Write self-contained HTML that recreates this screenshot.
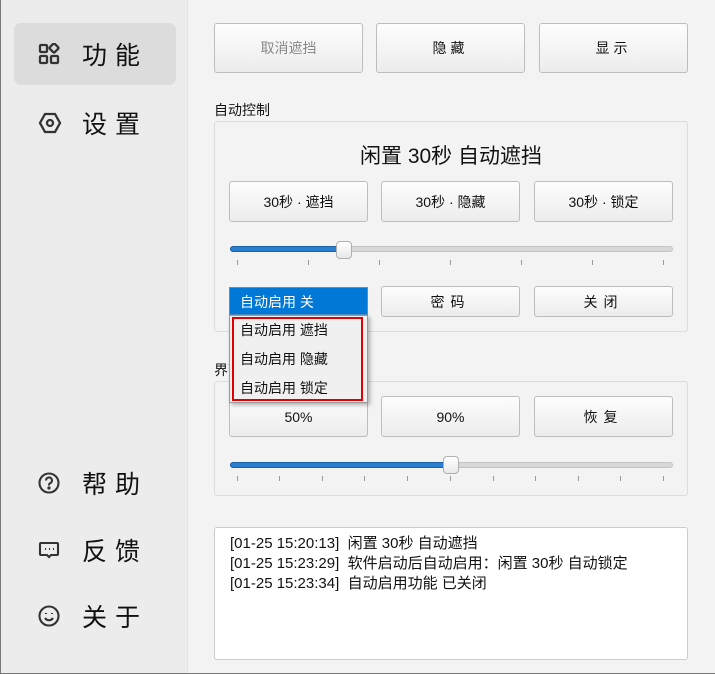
<!DOCTYPE html><html><head><meta charset="utf-8"><style>
*{box-sizing:border-box;margin:0;padding:0}
body{width:715px;height:674px;overflow:hidden;background:#f3f3f3;font-family:"Liberation Sans","Noto Sans CJK SC",sans-serif;color:#111;position:relative}
.frame{position:absolute;left:0;top:0;width:715px;height:674px;border-left:1px solid #777;border-bottom:1px solid #777;pointer-events:none;z-index:9}
.side{position:absolute;left:0;top:0;width:188px;height:674px;background:#ececec;border-right:1px solid #e4e4e4}
.nav{position:absolute;left:14px;width:162px;height:62px;display:flex;align-items:center;font-size:25px;letter-spacing:8px}
.nav.sel{background:#dcdcdc;border-radius:7px}
.nav svg{position:absolute;left:24px}
.nav span{position:absolute;left:68px}
.b{position:absolute;border:1px solid #bdbdbd;border-radius:3px;background:linear-gradient(#fdfdfd,#ececec);display:flex;align-items:center;justify-content:center;font-size:14px}
.grp{position:absolute;border:1px solid #dcdcdc;border-radius:3px;background:#f3f3f3}
.lbl{position:absolute;font-size:14px}
.track{position:absolute;height:6px;border-radius:3px;background:#d8d8d8;border:1px solid #c4c4c4}
.fill{position:absolute;height:6px;border-radius:3px;background:#2a7fd0;border:1px solid #1a60a8}
.h{position:absolute;width:16px;height:18px;border:1px solid #b0b0b0;border-radius:4px;background:linear-gradient(#fff,#e8e8e8)}
.tk{position:absolute;width:1px;height:5px;background:#999}
</style></head><body>
<div class="side">
<div class="nav sel" style="top:23px"><svg width="22" height="22" viewBox="0 0 22 22" fill="none" stroke="#333" stroke-width="2.3"><rect x="2" y="2" width="7" height="7" rx="1"/><rect x="2" y="13" width="7" height="7" rx="1"/><rect x="13" y="13" width="7" height="7" rx="1"/><rect x="12.5" y="1.5" width="7" height="7" rx="1" transform="rotate(45 16 5)"/></svg><span>功能</span></div>
<div class="nav" style="top:92px"><svg width="24" height="22" viewBox="0 0 24 22" fill="none" stroke="#333" stroke-width="2.3"><path d="M7 2h10l5 9-5 9H7L2 11z"/><circle cx="12" cy="11" r="3"/></svg><span>设置</span></div>
<div class="nav" style="top:452px"><svg width="22" height="22" viewBox="0 0 22 22" fill="none" stroke="#333" stroke-width="2.1"><circle cx="11" cy="11" r="9.5"/><path d="M8 8.5a3 3 0 1 1 4 2.8c-1 .4-1 1-1 2.2"/><circle cx="11" cy="16" r=".6" fill="#333"/></svg><span>帮助</span></div>
<div class="nav" style="top:519px"><svg width="22" height="22" viewBox="0 0 22 22" fill="none" stroke="#333" stroke-width="2.1"><path d="M3 4h16a1 1 0 0 1 1 1v10a1 1 0 0 1-1 1h-6l-2 2-2-2H3a1 1 0 0 1-1-1V5a1 1 0 0 1 1-1z"/><path d="M7 10h1M11 10h1M15 10h1"/></svg><span>反馈</span></div>
<div class="nav" style="top:585px"><svg width="22" height="22" viewBox="0 0 22 22" fill="none" stroke="#333" stroke-width="2.1"><circle cx="11" cy="11" r="9.5"/><path d="M7 13c2 3 6 3 8 0"/><path d="M8 8v1M14 8v1"/></svg><span>关于</span></div>
</div>
<div class="b" style="left:214px;top:23px;width:149px;height:50px;color:#888">取消遮挡</div>
<div class="b" style="left:376px;top:23px;width:149px;height:50px;letter-spacing:4px">隐藏</div>
<div class="b" style="left:539px;top:23px;width:149px;height:50px;letter-spacing:4px">显示</div>
<div class="lbl" style="left:214px;top:100px">自动控制</div>
<div class="grp" style="left:214px;top:121px;width:474px;height:211px"></div>
<div style="position:absolute;left:214px;width:474px;top:140px;text-align:center;font-size:21px">闲置 30秒 自动遮挡</div>
<div class="b" style="left:229px;top:181px;width:139px;height:41px">30秒 · 遮挡</div>
<div class="b" style="left:381px;top:181px;width:139px;height:41px">30秒 · 隐藏</div>
<div class="b" style="left:534px;top:181px;width:139px;height:41px">30秒 · 锁定</div>
<div class="track" style="left:230px;top:246px;width:443px"></div>
<div class="fill" style="left:230px;top:246px;width:115px"></div>
<div class="h" style="left:336px;top:241px"></div>
<div class="tk" style="left:237px;top:260px"></div><div class="tk" style="left:308px;top:260px"></div><div class="tk" style="left:379px;top:260px"></div><div class="tk" style="left:450px;top:260px"></div><div class="tk" style="left:521px;top:260px"></div><div class="tk" style="left:592px;top:260px"></div><div class="tk" style="left:663px;top:260px"></div>
<div class="b" style="left:381px;top:286px;width:139px;height:31px;letter-spacing:6px">密码</div>
<div class="b" style="left:534px;top:286px;width:139px;height:31px;letter-spacing:6px">关闭</div>
<div class="lbl" style="left:214px;top:360px">界面</div>
<div class="grp" style="left:214px;top:381px;width:474px;height:115px"></div>
<div class="b" style="left:229px;top:396px;width:139px;height:41px">50%</div>
<div class="b" style="left:381px;top:396px;width:139px;height:41px">90%</div>
<div class="b" style="left:534px;top:396px;width:139px;height:41px;letter-spacing:6px">恢复</div>
<div class="track" style="left:230px;top:462px;width:443px"></div>
<div class="fill" style="left:230px;top:462px;width:222px"></div>
<div class="h" style="left:443px;top:456px"></div>
<div class="tk" style="left:237px;top:476px"></div><div class="tk" style="left:279px;top:476px"></div><div class="tk" style="left:322px;top:476px"></div><div class="tk" style="left:364px;top:476px"></div><div class="tk" style="left:407px;top:476px"></div><div class="tk" style="left:450px;top:476px"></div><div class="tk" style="left:493px;top:476px"></div><div class="tk" style="left:535px;top:476px"></div><div class="tk" style="left:578px;top:476px"></div><div class="tk" style="left:620px;top:476px"></div><div class="tk" style="left:663px;top:476px"></div>
<div style="position:absolute;left:229px;top:287px;width:139px;height:28px;background:#0078d7;border:1px solid #5a8fc0;color:#fff;font-size:14px;padding:4px 0 0 10px">自动启用 关</div>
<div style="position:absolute;left:229px;top:315px;width:139px;height:88px;background:#f0f0f0;border:1px solid #999;box-shadow:2px 2px 4px rgba(0,0,0,.3);font-size:14px;line-height:29px;padding:0 0 0 10px">自动启用 遮挡<br>自动启用 隐藏<br>自动启用 锁定</div>
<div style="position:absolute;left:232px;top:317px;width:131px;height:84px;border:2px solid #e00000"></div>
<div style="position:absolute;left:214px;top:527px;width:474px;height:133px;background:#fff;border:1px solid #ccc;border-radius:3px;font-size:15px;line-height:20px;padding:6px 0 0 15px">[01-25 15:20:13]&nbsp; 闲置 30秒 自动遮挡<br>[01-25 15:23:29]&nbsp; 软件启动后自动启用：闲置 30秒 自动锁定<br>[01-25 15:23:34]&nbsp; 自动启用功能 已关闭</div>
<div class="frame"></div>
</body></html>
